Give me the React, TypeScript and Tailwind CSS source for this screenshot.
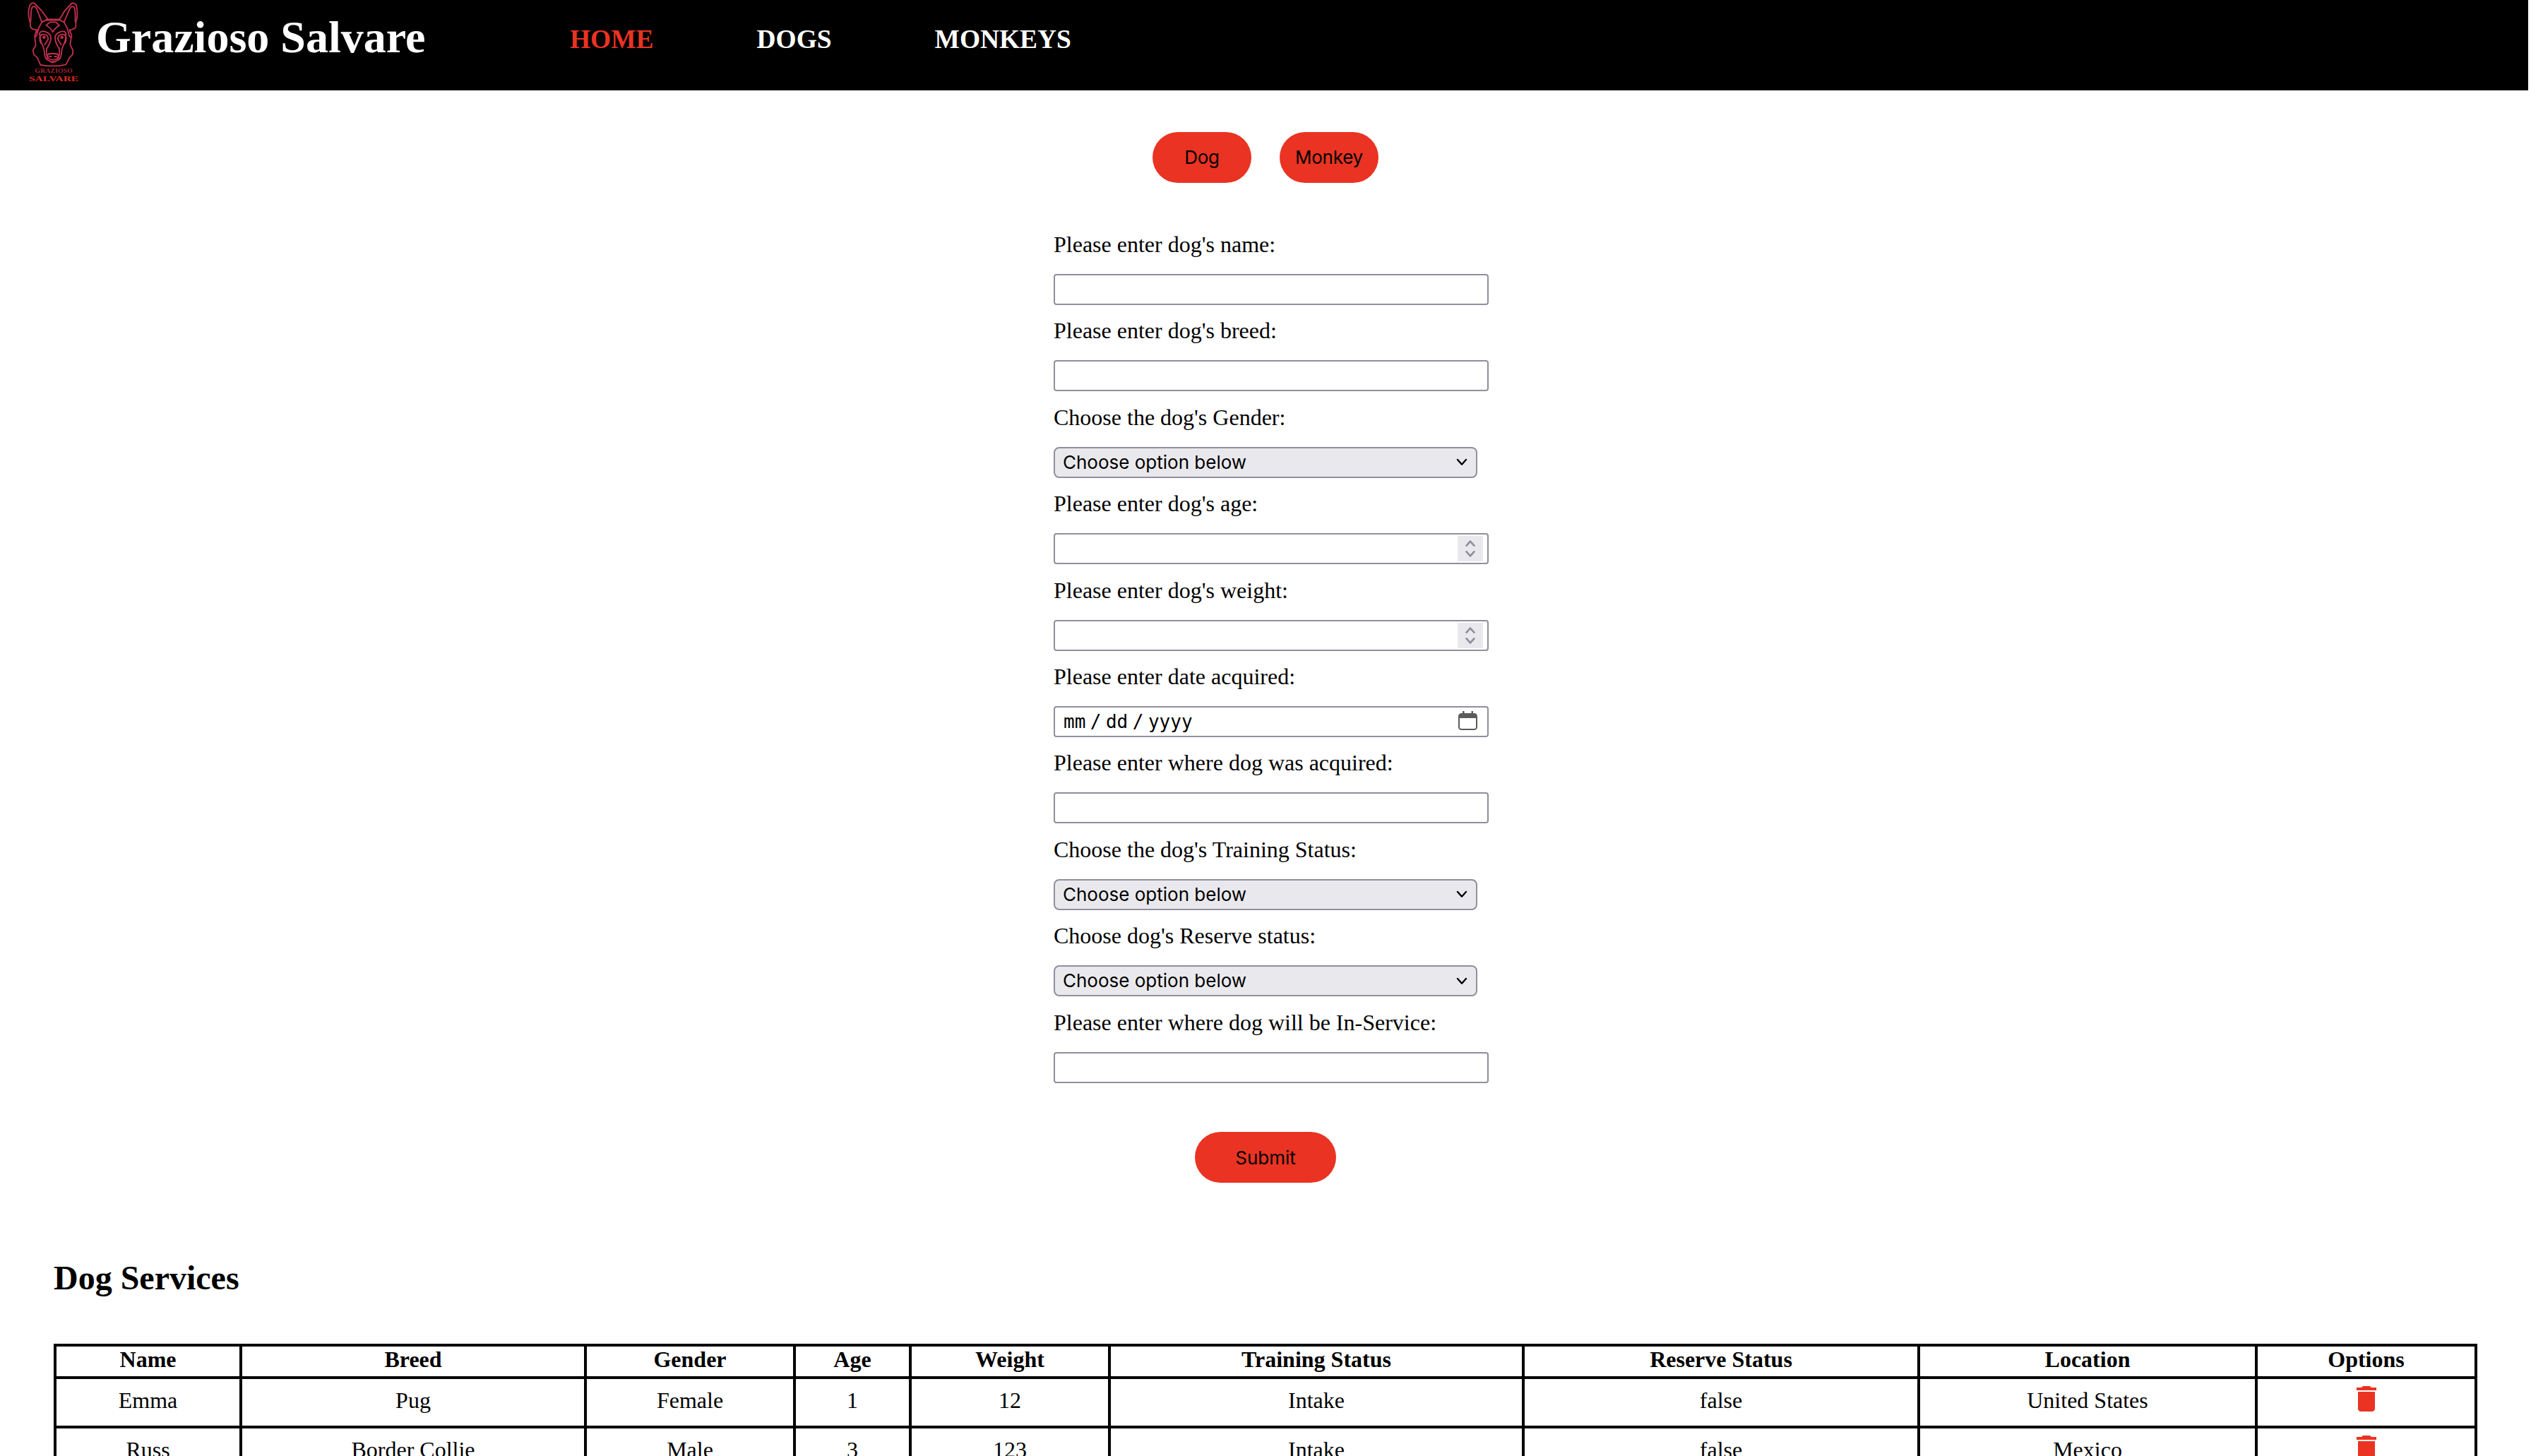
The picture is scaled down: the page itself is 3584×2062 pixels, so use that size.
import React from "react";
import { MdDelete } from "react-icons/md";

function Logo() {
  return (
    <svg className="h-[125px] w-[90px] shrink-0" viewBox="0 0 270 375" fill="none">
      <g stroke="#c2304f" strokeWidth="5.5" strokeLinejoin="round" strokeLinecap="round">
        <path d="M66 130C60 122 50 128 42 118C36 110 40 104 38 96C30 70 30 40 37 22C42 12 52 10 57 15L88 47L112 80L106 86L158 86L166 78L184 47L214 15C220 10 230 14 234 22C240 45 239 75 232 96C231 106 236 112 228 120C220 126 212 122 208 130" />
        <path d="M88 94L66 38C60 24 48 24 44 38C40 60 42 78 40 92M182 94L206 38C212 24 224 24 228 38C231 60 229 78 230 92" />
        <path d="M88 94L112 82L158 82L182 94L196 120L204 152L212 160L208 190L220 214L218 232L206 244L190 274L160 280L110 280L82 276L68 244L54 232L50 214L62 192L58 160L66 150L74 120L88 94" />
        <path d="M66 126C66 140 56 142 58 156M206 126C206 140 216 142 214 156" />
        <path d="M122 94L148 94L162 108C152 114 142 122 134 136C128 122 118 114 106 108Z" />
        <path d="M78 150C76 132 92 130 106 136C122 142 126 150 126 160C126 182 116 194 108 208M190 150C192 132 178 130 164 136C148 142 144 150 144 160C144 182 154 194 162 208" />
        <path d="M84 184C76 168 76 150 90 146C104 144 116 152 114 168L100 190M186 184C194 168 194 150 180 146C166 144 154 152 156 168L170 190" />
        <path d="M80 158C82 176 90 190 96 206C100 224 98 240 106 250C114 258 124 260 134 266C144 260 156 258 164 250C172 240 170 224 174 206C180 190 188 176 190 158" />
        <path d="M108 206C106 222 108 236 112 248M162 206C164 222 162 236 158 248" />
        <path d="M112 236C114 226 122 228 134 228C146 228 156 226 158 236C158 246 150 254 134 254C120 254 112 246 112 236ZM120 240H128M142 240H150M124 262H146" />
        <circle cx="97" cy="158" r="4" />
        <circle cx="173" cy="158" r="4" />
      </g>
      <text x="58" y="309" textLength="160" lengthAdjust="spacingAndGlyphs" className="fill-[#a3202c] font-['Liberation_Serif',serif] text-[23px]">GRAZIOSO</text>
      <text x="33" y="345" textLength="210" lengthAdjust="spacingAndGlyphs" className="fill-[#d92a1c] font-['Liberation_Serif',serif] text-[33px]">SALVARE</text>
    </svg>
  );
}

function Chevron({ className, width = 2.6 }: { className: string; width?: number }) {
  return (
    <svg className={className} viewBox="0 0 16 10" fill="none" stroke="currentColor" strokeWidth={width} strokeLinecap="round" strokeLinejoin="round">
      <path d="M2 1.5L8 8.2L14 1.5" />
    </svg>
  );
}

type Kind = "text" | "select" | "number" | "date";

const fields: { label: string; kind: Kind }[] = [
  { label: "Please enter dog's name:", kind: "text" },
  { label: "Please enter dog's breed:", kind: "text" },
  { label: "Choose the dog's Gender:", kind: "select" },
  { label: "Please enter dog's age:", kind: "number" },
  { label: "Please enter dog's weight:", kind: "number" },
  { label: "Please enter date acquired:", kind: "date" },
  { label: "Please enter where dog was acquired:", kind: "text" },
  { label: "Choose the dog's Training Status:", kind: "select" },
  { label: "Choose dog's Reserve status:", kind: "select" },
  { label: "Please enter where dog will be In-Service:", kind: "text" },
];

function Control({ kind }: { kind: Kind }) {
  if (kind === "select") {
    return (
      <div className="flex h-11 w-[600px] items-center justify-between rounded-lg border-2 border-[#8f8f9d] bg-[#e9e9ed] pr-3 pl-[11px] font-[Inter,sans-serif] text-[26px] leading-none">
        <span>Choose option below</span>
        <Chevron className="h-[11px] w-4" width={2.4} />
      </div>
    );
  }
  return (
    <div className="flex h-11 w-[616px] items-center justify-between rounded-[4px] border-2 border-[#8f8f9d] bg-white">
      {kind === "number" && (
        <div className="mr-[6px] ml-auto flex h-9 w-9 flex-col items-center justify-between bg-[#e9e9ed] py-[6px] text-[#8f8f9d]">
          <Chevron className="h-[9px] w-4 rotate-180" width={3} />
          <Chevron className="h-[9px] w-4" width={3} />
        </div>
      )}
      {kind === "date" && (
        <>
          <span className="pl-3 font-['DejaVu_Sans_Mono',monospace] text-[26px] leading-none">
            <span>mm</span>
            <span className="px-[6.500px]">/</span>
            <span>dd</span>
            <span className="px-[6.500px]">/</span>
            <span>yyyy</span>
          </span>
          <svg className="mr-[14px] mb-[2px] h-[27px] w-[27px]" viewBox="0 0 27 27">
            <path d="M6 0h2.500v3H18.500V0H21v3h1.500A4.500 4.500 0 0 1 27 7.500v15a4.500 4.500 0 0 1-4.500 4.500h-18A4.500 4.500 0 0 1 0 22.500v-15A4.500 4.500 0 0 1 4.500 3H6z M2 10v12.500A2.500 2.500 0 0 0 4.500 25h18a2.500 2.500 0 0 0 2.500-2.500V10z" fill="#5b5b5b" fillRule="evenodd" />
          </svg>
        </>
      )}
    </div>
  );
}

const columns = ["Name", "Breed", "Gender", "Age", "Weight", "Training Status", "Reserve Status", "Location", "Options"];
const rows = [
  ["Emma", "Pug", "Female", "1", "12", "Intake", "false", "United States"],
  ["Russ", "Border Collie", "Male", "3", "123", "Intake", "false", "Mexico"],
];

const pill = "flex h-[72px] items-center justify-center rounded-full bg-[#ea3323] font-[Inter,sans-serif] text-[26px] text-black";

export default function App() {
  return (
    <div className="h-[2062px] w-[3584px] overflow-hidden bg-white font-['Liberation_Serif','Times_New_Roman',serif] text-[32px] leading-[36px] text-black">
      <header className="flex h-32 w-[3580px] items-start bg-black pl-[30px] font-bold text-white">
        <Logo />
        <h1 className="ml-4 w-[671px] pt-[17px] text-[64px] leading-[72px]">Grazioso Salvare</h1>
        <nav className="flex gap-[146px] pt-[35px] text-[37.44px] leading-[42px]">
          <a className="text-[#ea3323]">HOME</a>
          <a>DOGS</a>
          <a>MONKEYS</a>
        </nav>
      </header>

      <div className="flex justify-center gap-10 pt-[59px]">
        <button className={`${pill} w-[140px] tracking-[-0.25px]`}>Dog</button>
        <button className={`${pill} w-[140px] tracking-[-0.25px]`}>Monkey</button>
      </div>

      <form className="mt-[69px] ml-[1492px] w-[616px]">
        {fields.map((f) => (
          <div key={f.label} className="h-[122.4px]">
            <label className="block h-[60px]">{f.label}</label>
            <Control kind={f.kind} />
          </div>
        ))}
      </form>

      <div className="flex justify-center pt-[51px]">
        <button className={`${pill} w-[200px] pt-[2px]`}>Submit</button>
      </div>

      <section className="px-[76px]">
        <h2 className="mt-[108px] text-[48px] leading-[54px] font-bold">Dog Services</h2>
        <table className="mt-[66px] w-[3432px] table-fixed border-collapse border-4 border-black text-center">
          <colgroup>
            <col className="w-[263px]" />
            <col className="w-[488px]" />
            <col className="w-[296px]" />
            <col className="w-[164px]" />
            <col className="w-[282px]" />
            <col className="w-[586px]" />
            <col className="w-[560px]" />
            <col className="w-[478px]" />
            <col className="w-[311px]" />
          </colgroup>
          <thead>
            <tr className="h-[46px]">
              {columns.map((c) => (
                <th key={c} className="border-4 border-black p-0 pb-[6px] align-middle leading-[36px] font-bold">{c}</th>
              ))}
            </tr>
          </thead>
          <tbody>
            {rows.map((r) => (
              <tr key={r[0]} className="h-[70px]">
                {r.map((v, i) => (
                  <td key={i} className="border-4 border-black p-0 pb-[6px] align-middle leading-[36px]">{v}</td>
                ))}
                <td className="border-4 border-black p-0 pt-1 align-top">
                  <MdDelete className="mx-auto block text-[48px] text-[#ea3323]" />
                </td>
              </tr>
            ))}
          </tbody>
        </table>
      </section>
    </div>
  );
}
